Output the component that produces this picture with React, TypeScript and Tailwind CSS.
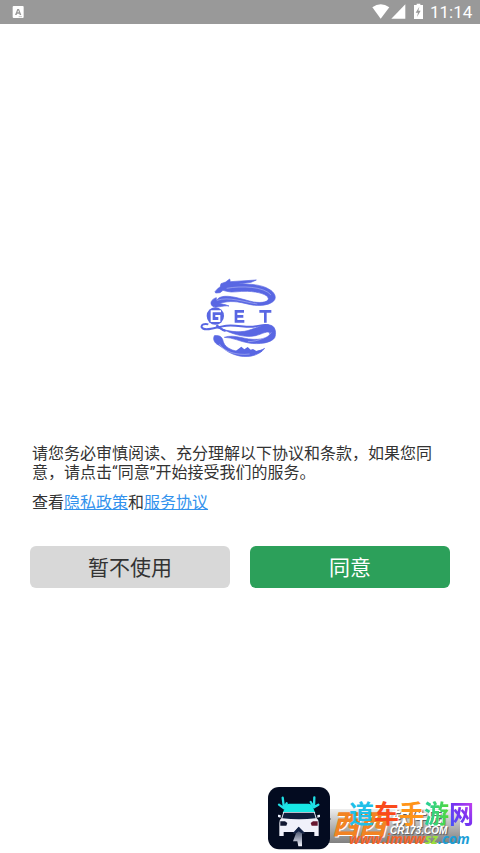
function StatusBar() {
  return (
    <header className="flex h-6 items-center justify-between bg-[#999999] pr-2 pl-3 text-white">
      <svg className="h-3 w-3" viewBox="0 0 36 36" aria-hidden="true">
        <rect x="2" y="0" width="33" height="36" rx="3" fill="#fff" />
        <path d="M9 27 16 9h5l7 18h-5l-1-4h-7l-1 4zM16 19h5l-2-6z" fill="#999" fillRule="evenodd" />
        <path d="M20 32h10" stroke="#aaa" strokeWidth="2" />
      </svg>
      <div className="flex items-center">
        <svg className="h-6 w-[70px]" viewBox="0 0 210 72" fill="#fff" aria-hidden="true">
          <path d="M37 22Q62 4 88 22L62 56Z" />
          <path d="M136 13V56H94Z" />
          <path d="M162 15h8v-4h11v4h8v42h-27z" />
          <path d="M178 20 167 38h7l-3 13 11-19h-7z" fill="#999" />
        </svg>
        <time className="w-[42px] text-right font-[Roboto,sans-serif] text-[17px] leading-6 whitespace-nowrap">11:14</time>
      </div>
    </header>
  );
}

function DragonLogo() {
  return (
    <svg className="h-[86px] w-[84px]" viewBox="0 0 252 258" role="img" aria-label="GET">
      <g fill="#5967e3" stroke="#5967e3" strokeWidth="2" strokeLinejoin="round">
        <path d="M57 50 66 40 72 37 75 26 89 21 101 12 103 20 181 15 165 22 128 27C164 26 199 30 218 42C235 51 241 64 236 74C226 91 191 94 164 89L137 83C105 76 77 81 61 90C56 76 68 65 86 64C111 62 145 75 173 81C201 85 218 80 217 70C215 59 188 50 154 49C128 48 108 54 92 49L81 46 72 53 59 54Z" />
        <path d="M61 68C45 73 41 85 49 93C58 102 80 90 99 93C83 86 66 87 61 82Z" />
        <path d="M61 157C85 166 114 173 145 169C175 164 204 143 225 151C240 156 241 177 236 188C226 204 189 209 158 204C132 200 110 187 85 187C117 176 146 196 185 193C210 191 223 181 221 174C216 166 198 177 179 182C139 191 98 171 72 160Z" />
        <path d="M55 182C75 179 80 190 82 201C89 222 119 233 162 232C180 231 197 226 206 220C189 243 151 251 116 239C91 231 75 213 62 207C53 200 51 191 55 182Z" />
        <path d="M105 230 120 227 136 215 145 223 155 216 164 224 171 222 181 228 190 226 199 229C176 242 133 244 105 230Z" stroke="none" />
      </g>
      <g fill="none" stroke="#5967e3">
        <path d="M37 148C25 144 15 150 17 157C25 172 63 155 91 152C121 149 146 157 171 155C194 153 208 145 222 153" strokeWidth="6" />
        <path d="M61 151C69 156 76 164 89 168" strokeWidth="7" />
      </g>
      <g fill="none" stroke="#fff" strokeWidth="1">
        <path d="M92 40C136 32 204 34 225 60M63 76C98 64 144 81 184 87M70 207C82 230 123 242 161 237M156 200C186 200 220 184 226 172" />
      </g>
      <circle cx="58" cy="123" r="26" fill="#5967e3" />
      <path d="M75 109H47V138H70V123H58" fill="none" stroke="#fff" strokeWidth="6" />
      <g fill="none" stroke="#5967e3" strokeWidth="8">
        <path d="M144 109H120V139H145M120 124H142" />
        <path d="M190 109H226M208 109V143" />
      </g>
    </svg>
  );
}

function CarBadge() {
  return (
    <svg className="h-16 w-16 shrink-0" viewBox="0 0 192 192" aria-hidden="true">
      <defs>
        <linearGradient id="beam" x1="0" x2="0" y1="0" y2="1">
          <stop stopColor="#172443" />
          <stop offset="1" stopColor="#f6f7ff" />
        </linearGradient>
      </defs>
      <rect x="3" y="0" width="186" height="187" rx="33" fill="#030b20" />
      <path d="M47 78 57 55Q59 50 66 50H125Q132 50 135 55L145 78Z" fill="#17e8e5" />
      <path d="M49 75H143L149 94Q155 98 155 108V147H142V135H50V147H37V108Q37 98 43 94Z" fill="#f0f1fa" />
      <path d="M51 77H141L146 94Q96 100 46 94Z" fill="#101e3d" />
      <path d="M33 83 41 84V92L33 90ZM159 83 151 84V92L159 90Z" fill="#eef2ff" />
      <path d="M40 103H54L61 108 58 116H40Z" fill="#111831" />
      <path d="M152 103H138L131 108 134 116H152Z" fill="#67172e" />
      <path d="M95 119 112 139H105V178H94L91 163H78L87 139H79Z" fill="url(#beam)" />
      <path d="M95 119 115 139H104L95 133 87 139H77Z" fill="#142345" />
      <path d="M47 32 51 63M36 53 51 64 59 49M142 31 141 61M131 45 141 61 154 53" fill="none" stroke="#20dfe5" strokeWidth="7" strokeLinecap="round" strokeLinejoin="round" />
    </svg>
  );
}

function Watermark() {
  return (
    <aside className="absolute right-0 bottom-0 w-[213px] font-['Noto_Sans_CJK_SC',sans-serif] leading-none">
      <div className="absolute top-[22px] right-5 flex h-[34px] w-[136px] items-start bg-linear-to-b from-[#eeeeee] to-[#808080]">
        <svg className="mt-1 h-3 w-2" viewBox="0 0 8 12" aria-hidden="true">
          <path d="M1 1 7 6 1 11" fill="#fff" stroke="#888" />
        </svg>
        <span className="w-[58px] text-[27px] leading-7 font-black whitespace-nowrap text-[#f28323] italic [text-shadow:1px_1px_0_#fff]">西西</span>
        <span className="flex flex-col items-center font-bold whitespace-nowrap text-white [text-shadow:1px_1px_1px_#555]">
          <span className="text-[18px] leading-4">软件园</span>
          <span className="font-['Liberation_Sans',sans-serif] text-[10px] leading-3 italic">CR173.COM</span>
        </span>
      </div>
      <div className="relative flex items-start">
        <CarBadge />
        <div className="ml-[18px] flex flex-col gap-[3px] pt-[9px] pb-[6px]">
          <p className="flex text-[25px] leading-8 font-bold">
            <span className="text-[#20bfe8]">道</span>
            <span className="text-[#fa4a1b]">车</span>
            <span className="text-[#ff9418]">手</span>
            <span className="bg-linear-to-r from-[#24ce9c] to-[#50d82d] bg-clip-text text-transparent">游</span>
            <span className="bg-linear-to-tr from-[#3455fa] via-[#7a2ff0] to-[#e13aed] bg-clip-text text-transparent">网</span>
          </p>
          <p className="font-['Open_Sans',sans-serif] text-sm leading-4 font-bold whitespace-nowrap text-[#f4642a] italic">
            www.imww<span className="text-[#9be03b]">sz</span><span className="text-[#1d9ed6]">.com</span>
          </p>
        </div>
      </div>
    </aside>
  );
}

export default function App() {
  return (
    <div className="relative min-h-screen bg-white font-[Roboto,'Noto_Sans_CJK_SC',sans-serif] text-[#333333]">
      <StatusBar />
      <main className="flex flex-col pt-[251px]">
        <div className="flex justify-center pr-1">
          <DragonLogo />
        </div>
        <section className="mt-[83px] px-8 text-base leading-[19px]">
          <p>请您务必审慎阅读、充分理解以下协议和条款，如果您同意，请点击“同意”开始接受我们的服务。</p>
          <p className="mt-[11px]">
            查看<a href="#privacy" className="text-[#3292ed] underline">隐私政策</a>和<a href="#terms" className="text-[#3292ed] underline">服务协议</a>
          </p>
        </section>
        <div className="mt-[34px] grid grid-cols-2 gap-5 px-[30px] text-[21px]">
          <button type="button" className="h-[42px] rounded-md bg-[#d8d8d8] pt-1">暂不使用</button>
          <button type="button" className="h-[42px] rounded-md bg-[#2ca05a] pt-1 text-white">同意</button>
        </div>
      </main>
      <Watermark />
    </div>
  );
}
